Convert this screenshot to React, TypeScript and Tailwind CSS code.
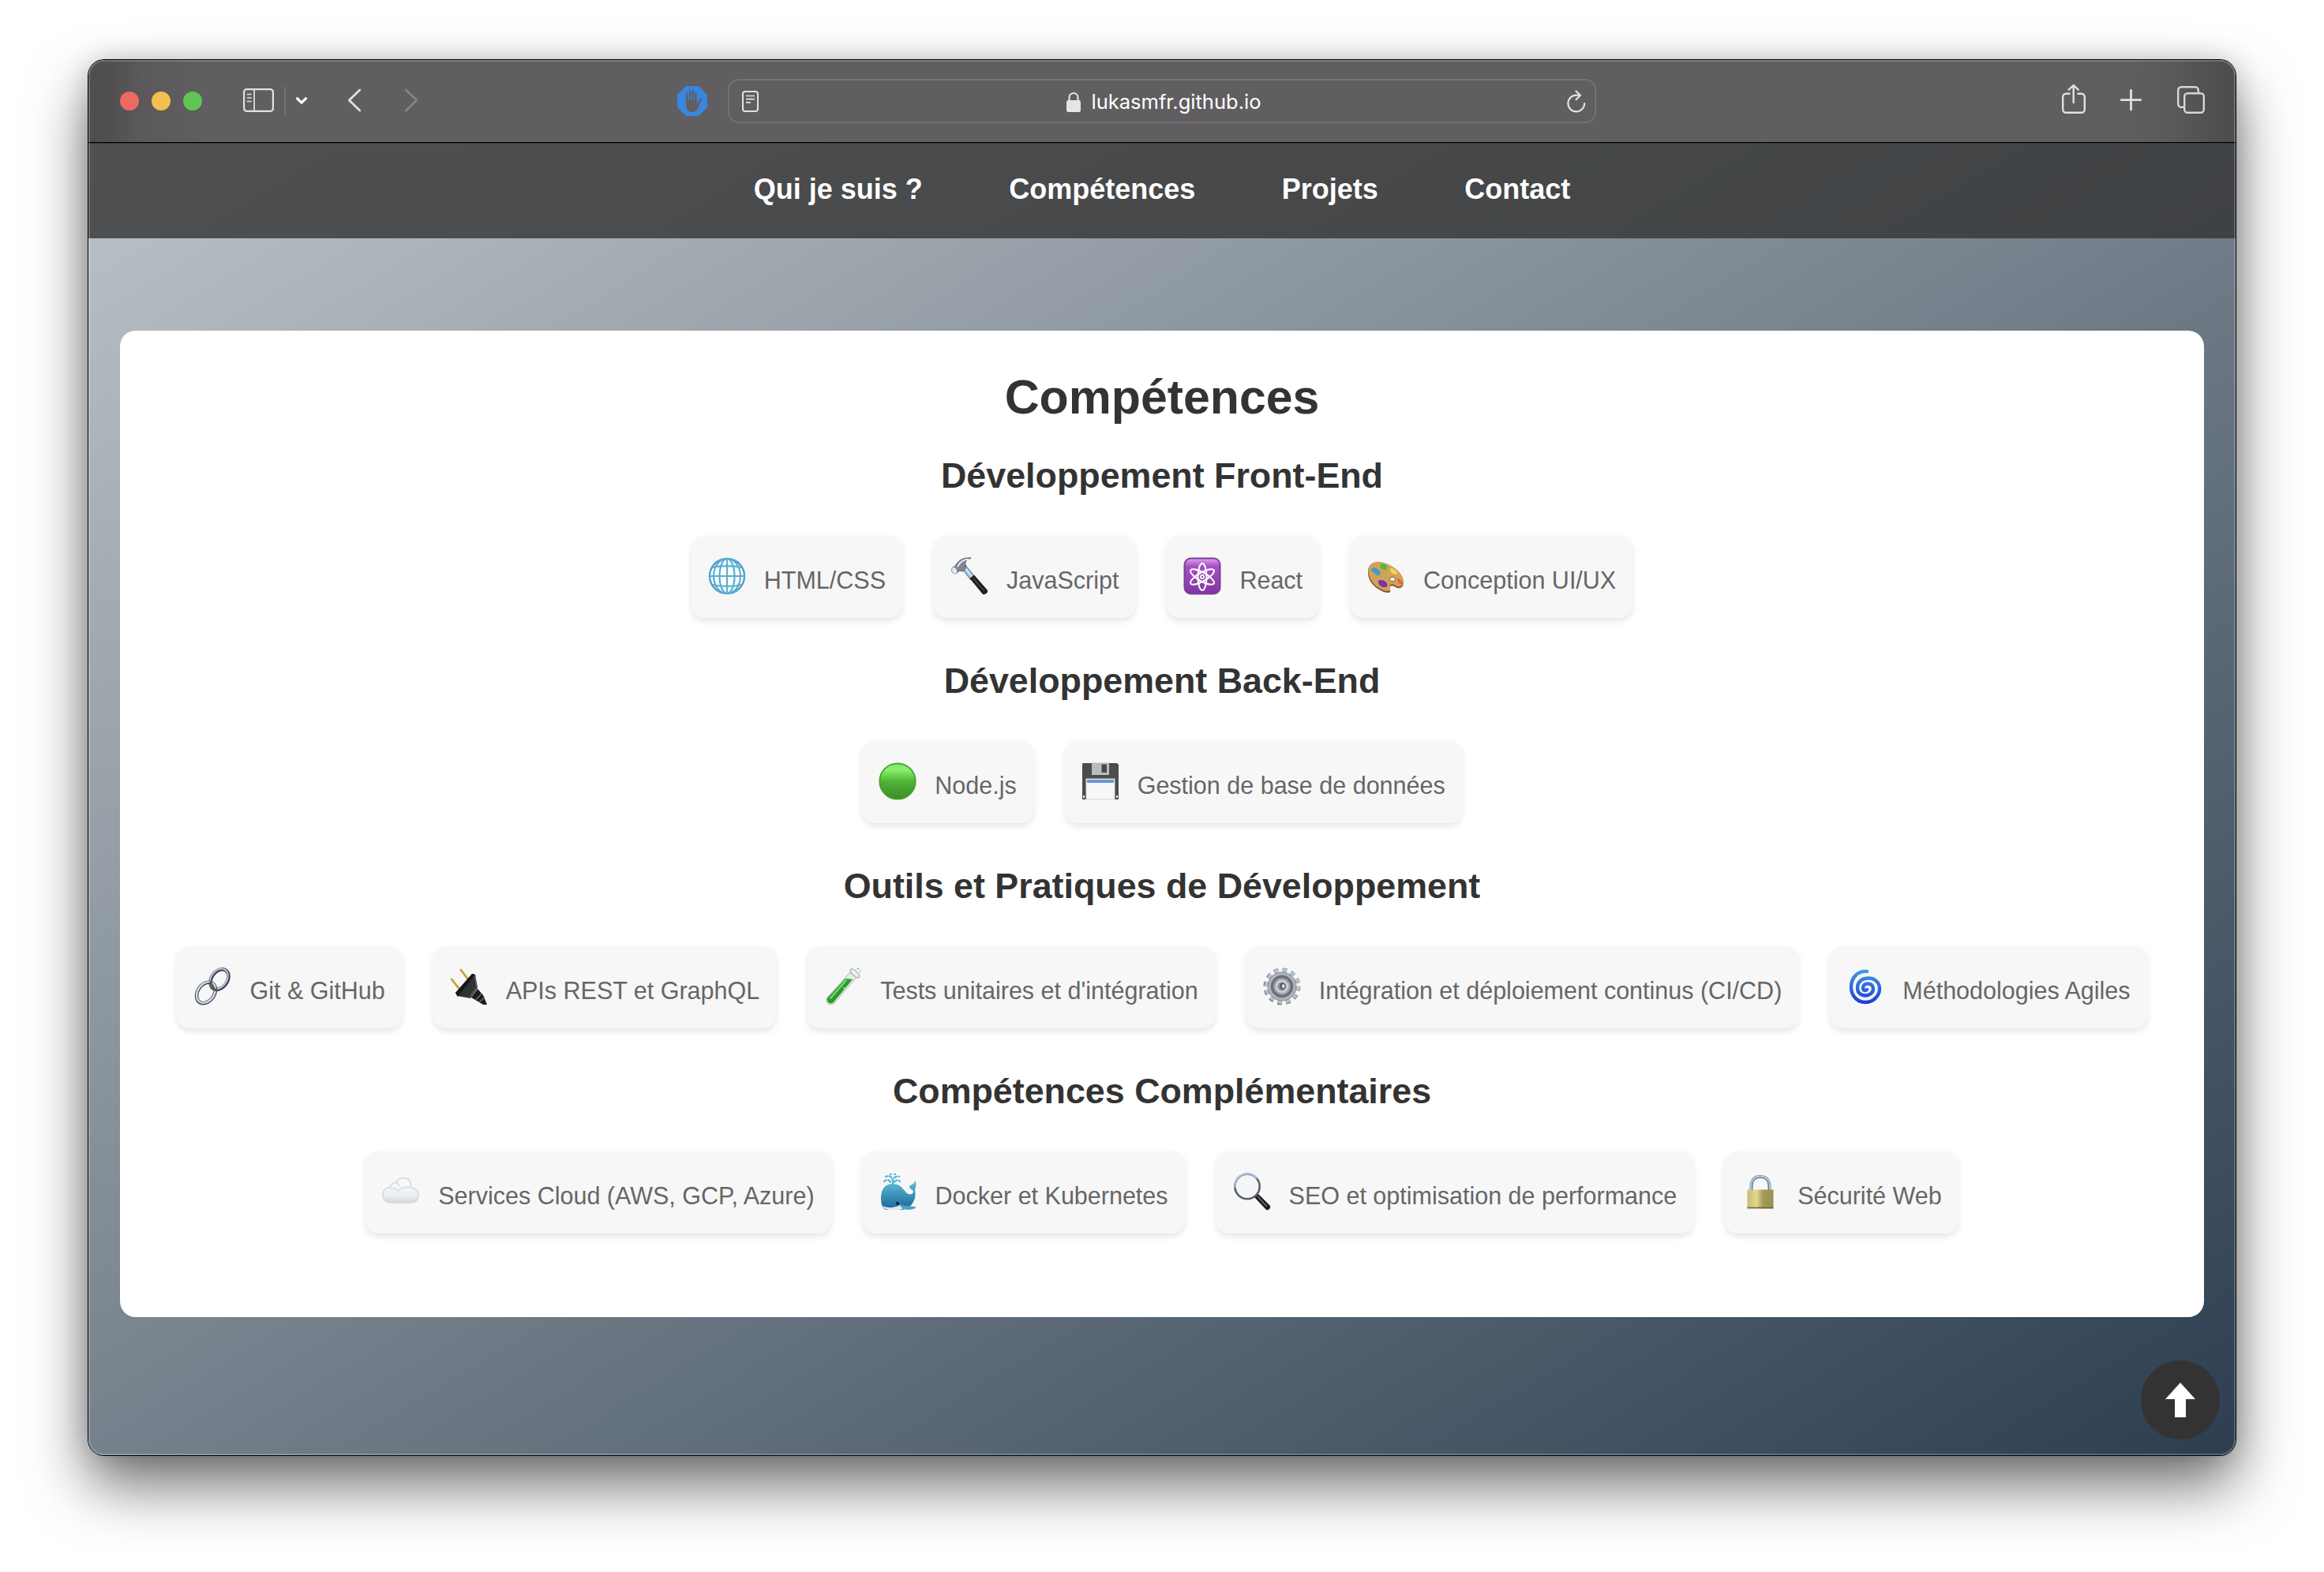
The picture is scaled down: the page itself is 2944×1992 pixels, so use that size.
import type { ReactNode } from "react";

type Skill = { icon: ReactNode; label: string };

function Emoji({ children }: { children: ReactNode }) {
  return (
    <svg viewBox="0 0 48 48" className="mb-[3px] ml-px mr-[23px] h-12 w-12 shrink-0 overflow-visible" fill="none">
      {children}
    </svg>
  );
}

const Globe = (
  <Emoji>
    <circle cx="24" cy="24" r="22" fill="#fdfefe" stroke="#4f9fc9" strokeWidth="2.4" />
    <g stroke="#5aaed6" strokeWidth="2.2">
      <ellipse cx="24" cy="24" rx="9.5" ry="22" />
      <ellipse cx="24" cy="24" rx="17" ry="22" />
      <path d="M24 2v44M2 24h44M6 13c10-2.500 26-2.500 36 0M6 35c10 2.500 26 2.500 36 0" />
    </g>
  </Emoji>
);

const Hammer = (
  <Emoji>
    <path d="M14 14l5-4 12 15-5 4z" fill="#9fbbe2" stroke="#5c6b85" />
    <path d="M18 13l10 13" stroke="#e6eefa" strokeWidth="1.500" />
    <path d="M24.500 27l5.500-4.500L47 42c1 3-3 6-6 5z" fill="#1d1f21" />
    <path d="M29 27l14 16" stroke="#4c5054" strokeWidth="1.200" />
    <path d="M2 18c-1-3 1-6 4-6 2-6 9-12 20-11-6 2-8 5-7 9 1 3 0 6-3 8-3-1-6-1-7 1-2 3-6 2-7-1z" fill="#7f8791" stroke="#4f555d" />
    <path d="M9 12C12 6 17 3 23 2.500" stroke="#e7edf6" strokeWidth="2" />
    <ellipse cx="5" cy="17" rx="3" ry="4" fill="#e3eaf2" transform="rotate(-20 5 17)" />
  </Emoji>
);

const Atom = (
  <Emoji>
    <defs>
      <linearGradient id="atom" x2="0" y2="1">
        <stop stopColor="#dca6ea" />
        <stop offset=".22" stopColor="#a94fc6" />
        <stop offset="1" stopColor="#7f36a0" />
      </linearGradient>
    </defs>
    <rect x="1.500" y="1.500" width="45" height="45" rx="8" fill="url(#atom)" stroke="#7b3f98" strokeWidth="2" />
    <g stroke="#fff" strokeWidth="2.100">
      <ellipse cx="24" cy="25" rx="5.500" ry="17" />
      <ellipse cx="24" cy="25" rx="5.500" ry="17" transform="rotate(60 24 25)" />
      <ellipse cx="24" cy="25" rx="5.500" ry="17" transform="rotate(120 24 25)" />
    </g>
    <circle cx="24" cy="25" r="3" fill="#fff" />
    <circle cx="24" cy="25" r="1.200" fill="#8b3fac" />
  </Emoji>
);

const Palette = (
  <Emoji>
    <path d="M1 17C2 8 10 5 19 7c13 3 27 14 27 25 0 6-4 8-8 7-3-1-6-4-9-2-2 2 1 5 0 7-2 2-8 1-14-3C6 36 0 27 1 17z" fill="#7d5222" />
    <path d="M1.500 15C3 7 11 4.500 19 6.500c13 3 27 14 27 24.500 0 5-4 7-8 6-3-1-6-4-9-2-2 2 1 5 0 7-2 2-8 1-14-3C6 34 .5 24 1.500 15z" fill="#d0a25a" />
    <ellipse cx="32" cy="28" rx="3.500" ry="2.800" fill="#f7f7f7" stroke="#8a5d2a" />
    <path d="M6 14c3-2 6 0 8 2 3 2 3 6 1 7-3 1-4-1-6-3s-5-3-3-6z" fill="#3f9bd3" />
    <path d="M17 9c4-2 6 0 8 3 1 3-1 5-4 4-3 0-6-4-4-7z" fill="#55b83a" />
    <path d="M30 14c3 0 6 2 8 6 0 3-3 2-5 1-3-1-5-5-3-7z" fill="#f6d848" />
    <path d="M38 27c3 0 5 3 7 6-1 3-4 1-6-1-1-2-2-4-1-5z" fill="#ee6248" />
    <path d="M14 30c3-2 8-1 11 3 1 3 0 5-3 5-4 1-9-4-8-8z" fill="#7931ad" />
  </Emoji>
);

const GreenCircle = (
  <Emoji>
    <defs>
      <linearGradient id="green" x2="0" y2="1">
        <stop stopColor="#7fe36a" />
        <stop offset=".18" stopColor="#86f26c" />
        <stop offset=".5" stopColor="#4fb536" />
        <stop offset="1" stopColor="#3f8a2c" />
      </linearGradient>
    </defs>
    <circle cx="24" cy="24" r="22.700" fill="url(#green)" stroke="#46a22d" strokeWidth="1.800" />
  </Emoji>
);

const Floppy = (
  <Emoji>
    <path d="M2 1h43l2 2v44H1V2z" fill="#4b4c4e" />
    <path d="M13 .500h22V16H13z" fill="#b9bcbe" />
    <path d="M25.500 2.500H32V13h-6.500z" fill="#47484a" />
    <rect x="6" y="21" width="36" height="26" fill="#f7f7f8" stroke="#d3d6d8" />
    <path d="M7 22h34v4H7z" fill="#6b96d4" />
    <path d="M2 42h2v3H2zM44 42h2v3h-2z" fill="#eee" />
  </Emoji>
);

const Link = (
  <Emoji>
    <ellipse cx="33" cy="15" rx="10" ry="14" transform="rotate(35 33 15)" stroke="#45414a" strokeWidth="4.500" />
    <ellipse cx="32.300" cy="14.300" rx="10" ry="14" transform="rotate(35 32.300 14.300)" stroke="#b4c9e3" strokeWidth="2" />
    <ellipse cx="16" cy="32" rx="10.500" ry="14.500" transform="rotate(35 16 32)" stroke="#45464e" strokeWidth="4.500" />
    <ellipse cx="16" cy="31.500" rx="10.500" ry="14.500" transform="rotate(35 16 31.500)" stroke="#cddcf0" strokeWidth="2.400" />
    <path d="M22 17c0 6 3 11 8 12" stroke="#5c5860" strokeWidth="3.500" />
  </Emoji>
);

const Plug = (
  <Emoji>
    <path d="M13 2l10 13M1.500 14l11 14" stroke="#c8a23d" strokeWidth="2.800" />
    <path d="M7 32L28 8l4 1 3 17-9 13-17-3z" fill="#303234" />
    <path d="M7 32L28 8l4 1-22 28z" fill="#17181a" />
    <path d="M31 11l3 14-9 12" stroke="#55585b" strokeWidth="1.500" />
    <path d="M27 38l8-11 7 8 5 12h-5z" fill="#1c1d1f" />
    <path d="M33 41l7-8M37 44l7-6" stroke="#707376" strokeWidth="1.200" />
  </Emoji>
);

const TestTube = (
  <Emoji>
    <path d="M34 5l8 6-29 34c-4 4-12 1-10-6z" fill="#e4ece6" stroke="#a5b3a8" />
    <path d="M27 14l9 1-24 29c-4 3-9 1-8-5z" fill="#2b9a28" />
    <path d="M28 16L8 39" stroke="#7fd974" strokeWidth="2" strokeLinecap="round" />
    <ellipse cx="39" cy="7.500" rx="7.500" ry="3" transform="rotate(42 39 7.500)" fill="#edf2ee" stroke="#a7aca8" />
    <circle cx="43" cy="1.500" r="1.500" fill="#8ce085" />
    <circle cx="46" cy="5" r="1" fill="#8ce085" />
    <circle cx="25" cy="26" r="1.300" fill="#80d578" />
  </Emoji>
);

const Gear = (
  <Emoji>
    <circle cx="24" cy="24" r="20.500" stroke="#7d838c" strokeWidth="6" strokeDasharray="5.400 5.334" />
    <circle cx="24.500" cy="23.500" r="20" stroke="#b9c0ca" strokeWidth="5" strokeDasharray="5.200 5.272" />
    <circle cx="24" cy="24" r="18" fill="#aeb4bd" stroke="#858b94" />
    <circle cx="24" cy="24" r="12.500" fill="#a0a5ac" stroke="#6c7075" strokeWidth="3.500" />
    <circle cx="24" cy="24" r="7" fill="#8c9198" stroke="#cbd3df" strokeWidth="2.500" />
    <ellipse cx="24.500" cy="23.500" rx="3" ry="4" fill="#5d554e" />
    <ellipse cx="25.500" cy="23.500" rx="1.400" ry="2.500" fill="#f7f7f7" />
  </Emoji>
);

const Cyclone = (
  <Emoji>
    <defs>
      <linearGradient id="cyclone" x1="0" y1="2" x2="0" y2="46" gradientUnits="userSpaceOnUse">
        <stop stopColor="#439be5" />
        <stop offset="1" stopColor="#1b3be0" />
      </linearGradient>
    </defs>
    <path
      d="M26 5C14 4 6 13 6 25c0 11 8 19 18 19s18-8 18-17c0-8-6-13.500-14-13.500S14 18 14 26c0 6 4 9.500 10 9.500 6 0 10-4 10-8.500 0-4-3-6.500-7-6.500s-6 2.500-6 5.500 3 4 5 2"
      stroke="url(#cyclone)"
      strokeWidth="4.400"
      strokeLinecap="round"
    />
  </Emoji>
);

const Cloud = (
  <Emoji>
    <defs>
      <linearGradient id="cloud" x2="0" y2="1">
        <stop stopColor="#fbfcfd" />
        <stop offset=".7" stopColor="#eceff3" />
        <stop offset="1" stopColor="#d3d9e0" />
      </linearGradient>
    </defs>
    <path d="M12 38C5 38 1 34 1 28s4-9 9-9c1-5 5-7 8-6 1-4 5-6 9-6 6 0 10 4 10 12 5 0 9 4 9 10 0 6-4 9-10 9z" fill="url(#cloud)" stroke="#cfd6de" strokeWidth="1.500" />
    <path d="M10 20c5-1 9 1 11 4 2-5 10-7 17-5M18 13c2 0 3 2 3 4" stroke="#dbe1e7" strokeWidth="2" />
  </Emoji>
);

const Whale = (
  <Emoji>
    <defs>
      <linearGradient id="whale" x2="0" y2="1">
        <stop stopColor="#62bfd6" />
        <stop offset="1" stopColor="#1c6497" />
      </linearGradient>
    </defs>
    <path d="M17 13C17 5 13 3 8 5M17 13c0-7 3-9 8-8M14 12c-2-3-4-4-8-1M19 12c2-3 5-3 7-1M14 2h1M19 2h1" stroke="#4bb9d6" strokeWidth="2.200" strokeLinecap="round" strokeDasharray="4 2.500" />
    <path d="M2 32c0-11 5-18 15-18 11 0 14 9 18 12 5 3 8 1 8-3-3-2-6-4-5-6 3-2 6-3 8-7 1 6 0 9-1 12 3 12-5 24-17 25H9c-5-1-7-7-7-15z" fill="url(#whale)" />
    <path d="M4 42c6 3 15 3 22-1l4 5c-8 2-20 2-24-1z" fill="#dcebf0" />
    <path d="M26 40c5 3 13 1 21 4-6 4-15 4-19 0z" fill="#4aa3c4" />
    <circle cx="23" cy="39" r="2" fill="#0f2231" />
  </Emoji>
);

const Magnifier = (
  <Emoji>
    <path d="M27 31l5-4 15 15c1 3-2 6-5 5z" fill="#1b1c1e" />
    <path d="M31 30l12 13" stroke="#6f7377" strokeWidth="1.500" />
    <circle cx="18" cy="17.500" r="15.700" fill="#f4f5f7" stroke="#5c6068" strokeWidth="2.600" />
    <path d="M2.500 19C1.500 9 9 1.500 18 1.500c5 0 9 2 12 6" stroke="#a9c4e8" strokeWidth="2" />
  </Emoji>
);

const Padlock = (
  <Emoji>
    <defs>
      <linearGradient id="padlock">
        <stop stopColor="#c6bd6e" />
        <stop offset=".35" stopColor="#e2da92" />
        <stop offset=".6" stopColor="#a49d57" />
        <stop offset="1" stopColor="#968f50" />
      </linearGradient>
    </defs>
    <path d="M12.500 24V18c0-8 4-13 11.500-13s11.500 5 11.500 13v6" stroke="#6f7f8e" strokeWidth="4" />
    <path d="M12 24V18c0-8 4.500-13.500 12-13.500S36 10 36 18v6" stroke="#b5cfe8" strokeWidth="1.800" />
    <rect x="7.500" y="21.500" width="33" height="24" rx="1" fill="url(#padlock)" />
    <path d="M7.500 44.500h33" stroke="#7a5c2e" strokeWidth="1.500" />
  </Emoji>
);

const sections: { title: string; skills: Skill[] }[] = [
  {
    title: "Développement Front-End",
    skills: [
      { icon: Globe, label: "HTML/CSS" },
      { icon: Hammer, label: "JavaScript" },
      { icon: Atom, label: "React" },
      { icon: Palette, label: "Conception UI/UX" },
    ],
  },
  {
    title: "Développement Back-End",
    skills: [
      { icon: GreenCircle, label: "Node.js" },
      { icon: Floppy, label: "Gestion de base de données" },
    ],
  },
  {
    title: "Outils et Pratiques de Développement",
    skills: [
      { icon: Link, label: "Git & GitHub" },
      { icon: Plug, label: "APIs REST et GraphQL" },
      { icon: TestTube, label: "Tests unitaires et d'intégration" },
      { icon: Gear, label: "Intégration et déploiement continus (CI/CD)" },
      { icon: Cyclone, label: "Méthodologies Agiles" },
    ],
  },
  {
    title: "Compétences Complémentaires",
    skills: [
      { icon: Cloud, label: "Services Cloud (AWS, GCP, Azure)" },
      { icon: Whale, label: "Docker et Kubernetes" },
      { icon: Magnifier, label: "SEO et optimisation de performance" },
      { icon: Padlock, label: "Sécurité Web" },
    ],
  },
];

function Toolbar() {
  return (
    <div className="flex h-[106px] items-start border-b border-[#343637] bg-[linear-gradient(90deg,#4f4d4f_0,#4f4d4f_16px,#5b595b_70px,#605e60_150px,#605e60_2570px,#5b595b_2640px,#4f4d4f_2704px)]">
      <div className="flex h-[105px] w-full items-center border-b border-black pl-10 text-[#e2e0e3]">
        <div className="flex gap-4">
          <span className="h-6 w-6 rounded-full bg-[#ee6a5f]" />
          <span className="h-6 w-6 rounded-full bg-[#f5bf4f]" />
          <span className="h-6 w-6 rounded-full bg-[#61c554]" />
        </div>
        <svg viewBox="308 108 39 40" className="ml-[52px] h-10 w-[39px] overflow-visible" fill="none" stroke="currentColor" strokeWidth="2.200">
          <rect x="309.100" y="113.100" width="36.800" height="27.800" rx="3.500" />
          <path d="M322 113v28M313.500 119.500h4.500M313.500 124h4.500M313.500 128.500h4.500" strokeLinecap="round" strokeWidth="1.700" />
        </svg>
        <span className="ml-[13px] h-9 w-0.5 bg-[#757376]" />
        <svg viewBox="375 108 14 40" className="ml-[13px] h-10 w-3.5 overflow-visible" fill="none" stroke="#fff" strokeWidth="3.200" strokeLinecap="round" strokeLinejoin="round">
          <path d="M376.600 124.800l5.400 5.400 5.400-5.400" />
        </svg>
        <svg viewBox="441 108 16 40" className="ml-[52px] h-10 w-4 overflow-visible" fill="none" stroke="currentColor" strokeWidth="2.800" strokeLinecap="round" strokeLinejoin="round">
          <path d="M455.800 114l-13.500 13 13.500 13" />
        </svg>
        <svg viewBox="513 108 16 40" className="ml-14 h-10 w-4 overflow-visible" fill="none" stroke="#868487" strokeWidth="2.800" strokeLinecap="round" strokeLinejoin="round">
          <path d="M514.300 114l13.500 13-13.500 13" />
        </svg>
        <svg viewBox="858 108 38 40" className="ml-[329px] h-10 w-[38px] overflow-visible">
          <path d="M869 109h16l11 11v16l-11 11h-16l-11-11v-16z" fill="#3a85dd" />
          <g stroke="#605e60" strokeWidth="2.300" strokeLinecap="round" fill="none">
            <path d="M870.500 118.500V132M874.200 115.500V130M877.800 115V130M881.300 117.500V132M887.500 125.500L883 135" />
          </g>
          <path d="M869.400 127h13l.5 5 3-5 1.500.5-3 9c-1.500 4-4 5.500-7.500 5.500-5 0-7.500-3-7.500-8z" fill="#605e60" />
        </svg>
        <div className="ml-[26px] flex h-14 w-[1100px] items-center justify-between rounded-[14px] border-2 border-[#737174] pl-4 pr-[11px]">
          <svg viewBox="940 108 21 40" className="h-10 w-[21px]" fill="none" stroke="currentColor" strokeWidth="2">
            <rect x="941" y="116" width="19" height="25" rx="3" />
            <path d="M945 121.500h11M945 125.700h11M945 129.900h6" strokeWidth="1.700" />
          </svg>
          <div className="flex items-center gap-3.5 pl-0.5">
            <svg viewBox="1351 108 18 40" className="h-10 w-[18px]" fill="none">
              <rect x="1351" y="127" width="18" height="15" rx="2.500" fill="#e6e5e6" />
              <path d="M1354.500 128v-4c0-8 11-8 11 0v4" stroke="#e6e5e6" strokeWidth="2.200" />
            </svg>
            <span className="whitespace-nowrap pt-px font-[Inter,sans-serif] text-[25.500px] leading-8 text-white">lukasmfr.github.io</span>
          </div>
          <svg viewBox="1986 108 24 40" className="h-10 w-6 overflow-visible" fill="none" stroke="currentColor" strokeWidth="2.200" strokeLinecap="round" strokeLinejoin="round">
            <path d="M2002.500 120.600h-5a10.400 10.400 0 1 0 10.700 10.400" />
            <path d="M1997.500 115.500l5.500 5.200-5.500 5.500" />
          </svg>
        </div>
        <svg viewBox="2612 108 30 40" className="ml-[590px] h-10 w-[30px] overflow-visible" fill="none" stroke="currentColor" strokeWidth="2.400" strokeLinecap="round" strokeLinejoin="round">
          <path d="M2621.500 118.700h-4.300a4 4 0 0 0-4 4v16a4 4 0 0 0 4 4h19.600a4 4 0 0 0 4-4v-16a4 4 0 0 0-4-4h-4.300" />
          <path d="M2626.700 130v-21M2620.700 113.700l6-5.700 6 5.700" />
        </svg>
        <svg viewBox="2686 108 27 40" className="ml-11 h-10 w-[27px] overflow-visible" fill="none" stroke="currentColor" strokeWidth="2.800" strokeLinecap="round">
          <path d="M2699.500 114.300v24.800M2687.200 126.600h24.600" />
        </svg>
        <svg viewBox="2758 108 35 40" className="ml-[45px] h-10 w-[35px] overflow-visible" fill="none" stroke="#d8d6d8" strokeWidth="2.400">
          <rect x="2767.200" y="118.200" width="24.600" height="24.600" rx="4" />
          <path d="M2766.500 135.800h-3.300a4 4 0 0 1-4-4v-17.600a4 4 0 0 1 4-4h17.600a4 4 0 0 1 4 4v3.500" />
        </svg>
      </div>
    </div>
  );
}

export default function App() {
  return (
    <div className="h-[1992px] w-[2944px] overflow-hidden bg-white pl-28 pt-[76px] font-['Liberation_Sans',Arial,sans-serif]">
      <div className="relative flex h-[1768px] w-[2720px] flex-col overflow-hidden rounded-[20px] shadow-[0_0_0_1px_#000,0_38px_76px_rgba(0,0,0,0.56),0_0_34px_rgba(0,0,0,0.18)]">
        <Toolbar />
        <div className="flex flex-1 flex-col bg-[linear-gradient(to_bottom_right,#bdc3c7,#2c3e50)]">
          <nav className="flex h-[120px] items-center justify-center gap-[109.500px] bg-[#333333]/80 pb-1 text-[36px] font-bold leading-none text-white">
            <a>Qui je suis ?</a>
            <a>Compétences</a>
            <a>Projets</a>
            <a>Contact</a>
          </nav>
          <main className="mx-10 mt-[117px] flex h-[1250px] flex-col items-center rounded-[20px] bg-white pt-12 text-[#333]">
            <h1 className="h-[72px] text-[60.800px] font-bold leading-[72px]">Compétences</h1>
            <div className="mt-[37px] flex flex-col gap-[53px]">
              {sections.map((section) => (
                <section key={section.title} className="flex flex-col items-center gap-[51px]">
                  <h2 className="text-[44.800px] font-bold leading-[52px]">{section.title}</h2>
                  <ul className="flex gap-10">
                    {section.skills.map((skill) => (
                      <li key={skill.label} className="flex h-[104px] items-center rounded-2xl bg-[#f7f7f7] pl-5 pr-[21px] shadow-[0_4px_8px_rgba(0,0,0,0.1)]">
                        {skill.icon}
                        <span className="whitespace-nowrap pt-2 text-[30.500px] leading-9 text-[#666]">{skill.label}</span>
                      </li>
                    ))}
                  </ul>
                </section>
              ))}
            </div>
          </main>
        </div>
        <button className="absolute bottom-5 right-5 flex h-[100px] w-[100px] items-center justify-center rounded-full bg-[#333]">
          <svg viewBox="0 0 40 44" className="h-11 w-10" fill="#fff">
            <path d="M20 0l19 21H27v23H13V21H1z" />
          </svg>
        </button>
        <div className="pointer-events-none absolute inset-0 rounded-[20px] border-2 border-white/20" />
      </div>
    </div>
  );
}
